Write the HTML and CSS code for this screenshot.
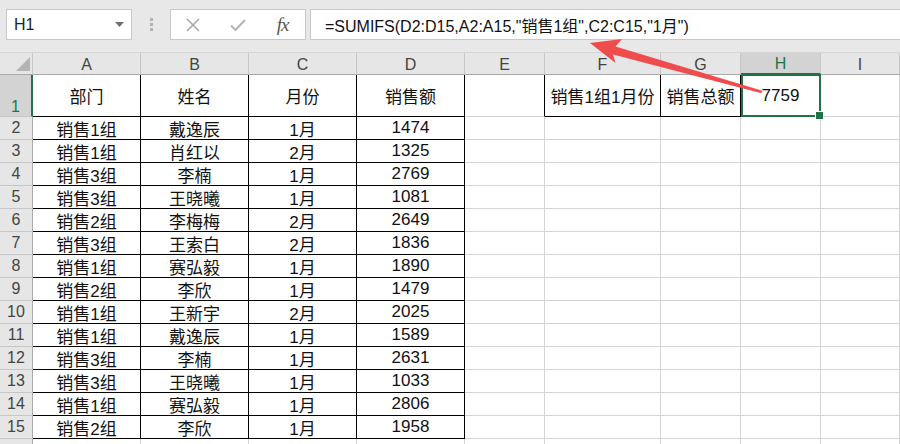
FILE: index.html
```html
<!DOCTYPE html>
<html lang="zh-CN">
<head>
    <meta charset="UTF-8">
    <meta name="viewport" content="width=device-width, initial-scale=1.0">
    <title>SUMIFS</title>
    <link rel="stylesheet" href="styles.css">
</head>
<body>
    <div class="toolbar">
        <div class="namebox">
            <span>H1</span>
            <svg width="9" height="5" viewBox="0 0 9 5"><path d="M0 0h9L4.5 5z" fill="#707070"/></svg>
        </div>
        <div class="grip"><i></i><i></i><i></i></div>
        <div class="fbtns">
            <span class="fbtn">
                <svg width="14" height="14" viewBox="0 0 14 14"><path d="M1 1l12 12M13 1L1 13" stroke="#a9a9a9" stroke-width="1.6" fill="none"/></svg>
            </span>
            <span class="fbtn">
                <svg width="16" height="12" viewBox="0 0 16 12"><path d="M1 6.5l4.5 4.5L15 1" stroke="#b4b4b4" stroke-width="2" fill="none"/></svg>
            </span>
            <span class="fbtn fx">fx</span>
        </div>
        <div class="formula">=SUMIFS(D2:D15,A2:A15,"销售1组",C2:C15,"1月")</div>
    </div>

    <div class="sheet" id="sheet">
        <!-- cells are filled in by the script below -->
    </div>

    <svg class="arrow" width="900" height="444" viewBox="0 0 900 444">
        <polygon points="590,43 622,39 615.5,46.5 762.3,90.8 761.5,93.2 613,54.5 615.5,63" fill="#ef4d4d"/>
    </svg>

    <script>
        const cols = ["A", "B", "C", "D", "E", "F", "G", "H", "I"];
        const data = [
            ["销售1组", "戴逸辰", "1月", 1474],
            ["销售1组", "肖红以", "2月", 1325],
            ["销售3组", "李楠", "1月", 2769],
            ["销售3组", "王晓曦", "1月", 1081],
            ["销售2组", "李梅梅", "2月", 2649],
            ["销售3组", "王索白", "2月", 1836],
            ["销售1组", "赛弘毅", "1月", 1890],
            ["销售2组", "李欣", "1月", 1479],
            ["销售1组", "王新宇", "2月", 2025],
            ["销售1组", "戴逸辰", "1月", 1589],
            ["销售3组", "李楠", "1月", 2631],
            ["销售3组", "王晓曦", "1月", 1033],
            ["销售1组", "赛弘毅", "1月", 2806],
            ["销售2组", "李欣", "1月", 1958]
        ];

        const sheet = document.getElementById("sheet");

        function addCell(text, classes) {
            const cell = document.createElement("div");
            cell.className = "cell " + classes;
            cell.textContent = text;
            sheet.appendChild(cell);
        }

        // column headers
        addCell("", "hd corner");
        cols.forEach(c => addCell(c, c === "H" ? "hd sel" : "hd"));

        // row 1
        addCell("1", "rh sel");
        ["部门", "姓名", "月份", "销售额"].forEach(t => addCell(t, "tb"));
        addCell("", "edge");
        addCell("销售1组1月份", "tb");
        addCell("销售总额", "tb");
        addCell("7759", "active");
        addCell("", "");

        // rows 2-15, plus the top sliver of row 16
        for (let r = 0; r < 15; r++) {
            const row = data[r];
            addCell(row ? String(r + 2) : "", "rh");
            (row || ["", "", "", ""]).forEach(v => addCell(v, row ? "tb" : ""));
            for (let i = 0; i < 5; i++) addCell("", "");
        }
    </script>
</body>
</html>
```

FILE: styles.css
```css
* {
    box-sizing: border-box;
}

html, body {
    margin: 0;
    padding: 0;
    overflow: hidden;
}

body {
    font-family: "Liberation Sans", "Noto Sans CJK SC", sans-serif;
    background-color: #fff;
    width: 900px;
    height: 444px;
    position: relative;
}

.toolbar {
    height: 53px;
    display: flex;
    align-items: flex-start;
    padding: 9px 0 0 6px;
    background-color: #e8e8e8;
    border-bottom: 1px solid #d6d6d6;
}

.namebox {
    width: 126px;
    height: 31px;
    display: flex;
    align-items: center;
    justify-content: space-between;
    padding: 0 7px 0 7px;
    background: #fff;
    border: 1px solid #c8c8c8;
    font-size: 16px;
    color: #222;
}

.grip {
    width: 38px;
    height: 31px;
    display: flex;
    flex-direction: column;
    align-items: center;
    justify-content: center;
    gap: 2px;
}

.grip i {
    width: 3px;
    height: 3px;
    background: #b3b3b3;
}

.fbtns {
    width: 136px;
    height: 31px;
    display: flex;
    align-items: center;
    background: #fff;
    border: 1px solid #c8c8c8;
}

.fbtn {
    width: 45px;
    display: flex;
    justify-content: center;
    align-items: center;
}

.fx {
    font-family: "Liberation Serif", serif;
    font-style: italic;
    font-size: 19px;
    color: #555;
    letter-spacing: -1px;
}

.formula {
    flex: 1;
    height: 31px;
    margin-left: 4px;
    padding-left: 14px;
    display: flex;
    align-items: center;
    background: #fff;
    border: 1px solid #c8c8c8;
    border-right: none;
    font-size: 16px;
    color: #111;
    white-space: nowrap;
}

.sheet {
    display: grid;
    grid-template-columns: 33px 108px 108px 108px 108px 80px 116px 80px 80px 79px;
    grid-template-rows: 22px 42px repeat(15, 23px);
}

.cell {
    display: flex;
    align-items: center;
    justify-content: center;
    border-right: 1px solid #d4d4d4;
    border-bottom: 1px solid #d4d4d4;
    font-size: 17px;
    color: #111;
    white-space: nowrap;
}

.hd {
    background: #e6e6e6;
    color: #444;
    font-size: 16px;
    padding-top: 2px;
    border-right-color: #c6c6c6;
    border-bottom-color: #ababab;
}

.hd.sel {
    background: #d3d3d3;
    color: #217346;
    border-bottom: 2px solid #217346;
}

.corner {
    position: relative;
}

.corner::after {
    content: "";
    position: absolute;
    right: 2px;
    bottom: 3px;
    border-left: 14px solid transparent;
    border-bottom: 14px solid #b4b4b4;
}

.rh {
    background: #e6e6e6;
    color: #444;
    font-size: 16px;
    border-right-color: #ababab;
    border-bottom-color: #c6c6c6;
}

.rh.sel {
    background: #d3d3d3;
    color: #217346;
    align-items: flex-end;
    padding-bottom: 0;
    border-right: 2px solid #217346;
}

.tb {
    border-right-color: #000;
    border-bottom-color: #000;
}

.edge {
    border-right-color: #000;
}

.active {
    position: relative;
}

.active::after {
    content: "";
    position: absolute;
    left: 0;
    top: -1px;
    right: -1px;
    bottom: -1px;
    border: 2px solid #217346;
}

.active::before {
    content: "";
    position: absolute;
    right: -4px;
    bottom: -4px;
    width: 7px;
    height: 7px;
    background: #217346;
    border: 1px solid #fff;
    z-index: 2;
}

.arrow {
    position: absolute;
    top: 0;
    left: 0;
    pointer-events: none;
}
```
